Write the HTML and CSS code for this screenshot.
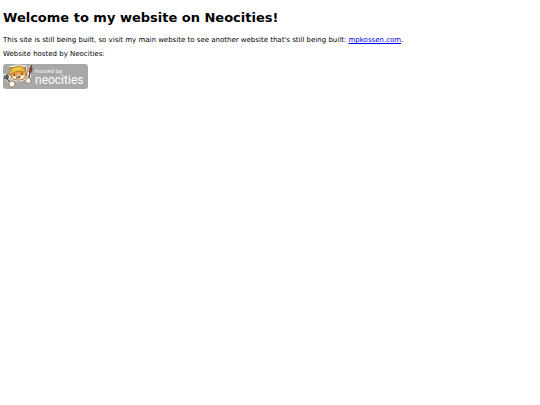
FILE: index.html
```html
<!DOCTYPE html>
<html lang="en">
<head>
<meta charset="utf-8">
<title>My website on Neocities</title>
<link rel="stylesheet" href="styles.css">
</head>
<body>
<h1>Welcome to my website on Neocities!</h1>
<p>This site is still being built, so visit my main website to see another website that's still being built: <a href="#">mpkossen.com</a>.</p>
<p>Website hosted by Neocities:</p>
<a class="badge" href="#">
  <svg class="cat" viewBox="0 0 90 75" aria-hidden="true">
    <g stroke="#fff" stroke-width="5" stroke-linejoin="round" stroke-linecap="round" fill="#fff">
      <path d="M21 24 20 9 31 8Q45 1 58 7L69 7 69 23Q75 38 63 46 49 52 34 48 21 43 21 24Z"/>
      <path d="M8 39 24 57M4 34 10 44 17 39M82 10 77 49" fill="none" stroke-width="9"/>
    </g>
    <path d="M21 25 20 10 31 12Q47 5 60 12L68 8 69 23Q75 38 62 45 48 51 34 47 21 41 21 25Z" fill="#eda04b" stroke="#72451f" stroke-width="2"/>
    <path d="M27 39Q32 35 41 38L46 29 51 36Q62 32 66 36 63 44 53 46 36 49 27 39Z" fill="#fff3df"/>
    <path d="M17 29Q24 10 42 6 60 3 67 19L62 24Q42 17 24 31Z" fill="#e8b83a" stroke="#9a6b20" stroke-width="2"/>
    <path d="M30 20Q40 12 54 14" fill="none" stroke="#f8d568" stroke-width="3"/>
    <path d="M34 29v6M57 26v6M43 36l4 2 4-3M39 41q7 4 13-2" fill="none" stroke="#3c2b20" stroke-width="3"/>
    <path d="M10 43 25 58M4 34 6 43 12 44 16 40 13 32M9 33 11 43" fill="none" stroke="#444" stroke-width="4"/>
    <path d="M81 24 76 49" stroke="#513b34" stroke-width="4"/>
    <path d="M85 4Q90 15 84 26L78 24Q77 12 85 4Z" fill="#963c32" stroke="#572d28" stroke-width="2"/>
    <g fill="#fffaf0" stroke="#8d5a30" stroke-width="2"><circle cx="27" cy="60" r="9"/><circle cx="76" cy="50" r="8"/></g>
  </svg>
  <span class="label"><span class="hosted">hosted by</span><span class="name">neocities</span></span>
</a>
</body>
</html>
```

FILE: styles.css
```css
body {
  margin: 0;
  padding: 9px 3px;
  background: #fff;
  color: #000;
  font: 7px/9px "DejaVu Sans", Verdana, sans-serif;
}
h1 {
  margin: 0 0 10px;
  font-size: 13px;
  line-height: 17px;
}
p { margin: 0 0 5px; }
a { color: #00e; }
.badge {
  display: flex;
  box-sizing: border-box;
  width: 85px;
  height: 25px;
  border-radius: 3px;
  background: #a8a8a8;
  color: #fff;
  text-decoration: none;
  font-family: Roboto, sans-serif;
}
.cat {
  width: 30px;
  height: 25px;
}
.label {
  display: flex;
  flex-direction: column;
  padding: 4px 0 0 2px;
}
.hosted {
  font-family: "Open Sans", sans-serif;
  font-size: 6px;
  line-height: 7px;
}
.name {
  font-size: 12px;
  line-height: 10px;
}
```
